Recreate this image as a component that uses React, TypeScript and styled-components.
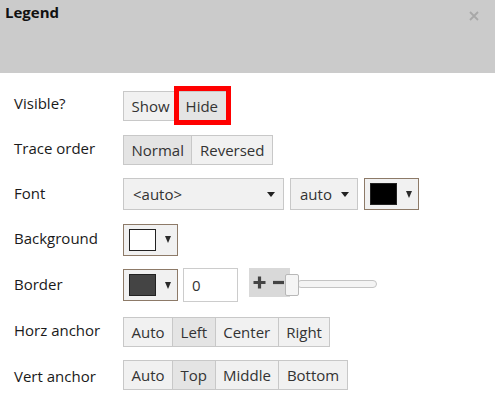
import React from 'react';
import styled, { createGlobalStyle } from 'styled-components';

const GlobalStyle = createGlobalStyle`
  html, body {
    margin: 0;
    padding: 0;
    background: #ffffff;
  }

  body {
    font-family: 'Open Sans', 'Liberation Sans', sans-serif;
  }
`;

const Panel = styled.div`
  width: 495px;
  height: 403px;
  overflow: hidden;
  background: #ffffff;
`;

const Header = styled.div`
  height: 73px;
  background: #cbcbcb;
  display: flex;
  justify-content: space-between;
  align-items: flex-start;
  padding: 2px 16px 0 5px;
  box-sizing: border-box;
`;

const Title = styled.div`
  font-size: 15px;
  font-weight: 700;
  line-height: 20px;
  color: #111111;
`;

const Close = styled.div`
  margin-top: 9px;
  width: 10px;
  height: 10px;
  display: flex;
`;

const Body = styled.div`
  display: flex;
  flex-direction: column;
  gap: 13.5px;
  padding: 18px 0 0 14px;
`;

const Row = styled.div<{ $h: number; $labelTop: number }>`
  display: flex;
  align-items: flex-start;
  height: ${({ $h }) => $h}px;

  & > label {
    padding-top: ${({ $labelTop }) => $labelTop}px;
  }
`;

const Label = styled.label`
  width: 109px;
  flex: none;
  font-size: 15px;
  line-height: 20px;
  color: #1a1a1a;
`;

const Group = styled.div`
  display: flex;
  height: 30px;
`;

const SegButton = styled.div<{ $active?: boolean }>`
  position: relative;
  display: flex;
  align-items: center;
  padding: 0 7.5px;
  font-size: 15px;
  color: #333333;
  background: ${({ $active }) => ($active ? '#e4e4e4' : '#f1f1f1')};
  border: 1px solid #c8c8c8;
  box-sizing: border-box;

  & + & {
    border-left: none;
  }
`;

const Highlight = styled.span`
  position: absolute;
  left: -4px;
  top: -6px;
  right: -5px;
  bottom: -5px;
  border: 5px solid #ff0000;
`;

const Controls = styled.div`
  display: flex;
  align-items: flex-start;
  gap: 6px;
`;

const Dropdown = styled.div<{ $w: number }>`
  width: ${({ $w }) => $w}px;
  height: 32px;
  box-sizing: border-box;
  display: flex;
  align-items: center;
  justify-content: space-between;
  padding: 0 8px 0 9px;
  background: #f1f1f1;
  border: 1px solid #c8c8c8;
  font-size: 15px;
  color: #333333;
`;

const Caret = styled.span`
  width: 0;
  height: 0;
  border-left: 4.5px solid transparent;
  border-right: 4.5px solid transparent;
  border-top: 5px solid #222222;
`;

const Swatch = styled.div`
  width: 55px;
  height: 32px;
  box-sizing: border-box;
  display: flex;
  align-items: center;
  gap: 9px;
  padding-left: 5px;
  background: #f1f1f1;
  border: 1px solid #8d7a68;
`;

const SwatchColor = styled.span<{ $color: string }>`
  width: 27px;
  height: 22px;
  box-sizing: border-box;
  background: ${({ $color }) => $color};
  border: 1px solid #222222;
`;

const SmallCaret = styled.span`
  width: 0;
  height: 0;
  border-left: 3.5px solid transparent;
  border-right: 3.5px solid transparent;
  border-top: 7px solid #2a2a2a;
`;

const NumberBox = styled.div`
  width: 55px;
  height: 34px;
  margin-top: -1px;
  margin-left: -1px;
  box-sizing: border-box;
  display: flex;
  align-items: center;
  padding-left: 8px;
  background: #ffffff;
  border: 1px solid #cccccc;
  font-size: 15px;
  color: #333333;
`;

const Slider = styled.div`
  display: flex;
  align-items: flex-start;
  margin-left: 5px;
  margin-top: -1px;
`;

const Stepper = styled.div`
  width: 41px;
  height: 29px;
  background: #d9d9d9;
  display: flex;
  align-items: center;
  gap: 7px;
  padding-left: 4px;
  box-sizing: border-box;
`;

const Track = styled.div`
  position: relative;
  width: 80px;
  height: 8px;
  margin: 12px 0 0 7px;
  box-sizing: border-box;
  background: #f4f4f4;
  border: 1px solid #c4c4c4;
  border-radius: 4px;
`;

const Handle = styled.span`
  position: absolute;
  left: -13px;
  top: -7px;
  width: 14px;
  height: 22px;
  box-sizing: border-box;
  background: #f5f5f5;
  border: 1px solid #b8b8b8;
  border-radius: 2px;
`;

const CloseIcon = () => (
  <svg width='10' height='10' viewBox='0 0 10 10'>
    <path d='M1 1 L9 9 M9 1 L1 9' stroke='#a8a8a8' strokeWidth='1.8' />
  </svg>
);

const PlusIcon = () => (
  <svg width='13' height='13' viewBox='0 0 13 13'>
    <path d='M6.5 0.5 V12.5 M0.5 6.5 H12.5' stroke='#444444' strokeWidth='3.2' />
  </svg>
);

const MinusIcon = () => (
  <svg width='11' height='13' viewBox='0 0 11 13'>
    <path d='M0 6.5 H11' stroke='#444444' strokeWidth='3.2' />
  </svg>
);

type Option = { label: string; active?: boolean; marked?: boolean };

const Segmented = ({ options }: { options: Option[] }) => (
  <Group>
    {options.map((o) => (
      <SegButton $active={o.active} key={o.label}>
        {o.label}
        {o.marked && <Highlight />}
      </SegButton>
    ))}
  </Group>
);

const ColorPick = ({ color }: { color: string }) => (
  <Swatch>
    <SwatchColor $color={color} />
    <SmallCaret />
  </Swatch>
);

export default function App() {
  return (
    <>
      <GlobalStyle />
      <Panel>
        <Header>
          <Title>Legend</Title>
          <Close><CloseIcon /></Close>
        </Header>
        <Body>
          <Row $h={30} $labelTop={2}>
            <Label>Visible?</Label>
            <Segmented options={[{ label: 'Show' }, { label: 'Hide', active: true, marked: true }]} />
          </Row>
          <Row $h={30} $labelTop={3}>
            <Label>Trace order</Label>
            <Segmented options={[{ label: 'Normal', active: true }, { label: 'Reversed' }]} />
          </Row>
          <Row $h={32} $labelTop={5}>
            <Label>Font</Label>
            <Controls>
              <Dropdown $w={161}>
                &lt;auto&gt;
                <Caret />
              </Dropdown>
              <Dropdown $w={68}>
                auto
                <Caret />
              </Dropdown>
              <ColorPick color='#000000' />
            </Controls>
          </Row>
          <Row $h={32} $labelTop={4}>
            <Label>Background</Label>
            <ColorPick color='#ffffff' />
          </Row>
          <Row $h={34} $labelTop={5}>
            <Label>Border</Label>
            <Controls>
              <ColorPick color='#444444' />
              <NumberBox>0</NumberBox>
              <Slider>
                <Stepper>
                  <PlusIcon />
                  <MinusIcon />
                </Stepper>
                <Track>
                  <Handle />
                </Track>
              </Slider>
            </Controls>
          </Row>
          <Row $h={30} $labelTop={3}>
            <Label>Horz anchor</Label>
            <Segmented
              options={[{ label: 'Auto' }, { label: 'Left', active: true }, { label: 'Center' }, { label: 'Right' }]}
            />
          </Row>
          <Row $h={30} $labelTop={6}>
            <Label>Vert anchor</Label>
            <Segmented
              options={[{ label: 'Auto' }, { label: 'Top', active: true }, { label: 'Middle' }, { label: 'Bottom' }]}
            />
          </Row>
        </Body>
      </Panel>
    </>
  );
}
